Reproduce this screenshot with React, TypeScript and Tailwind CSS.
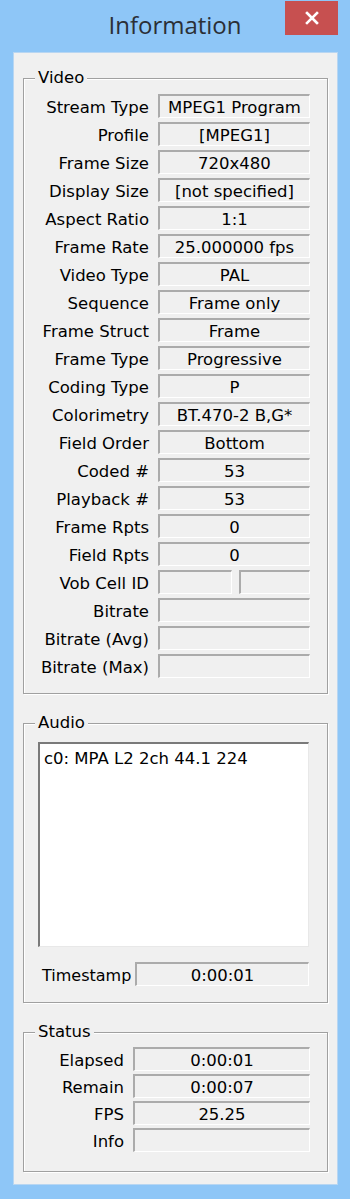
import React from "react";

const F = { fontFamily: '"DejaVu Sans", "Liberation Sans", sans-serif' };

function Field({ value, className = "" }: { value?: string; className?: string }) {
  return (
    <div
      className={
        "h-[24px] pt-[3px] flex items-center justify-center border-t-2 border-l-2 border-[#ababab] border-b border-r border-b-white border-r-white bg-[#f0f0f0] text-[16.5px] text-black leading-none whitespace-nowrap overflow-hidden " +
        className
      }
    >
      {value}
    </div>
  );
}

function Group({ title, className = "", children }: { title: string; className?: string; children: React.ReactNode }) {
  return (
    <div
      className={
        "relative border border-[#a0a0a0] shadow-[inset_1px_1px_0_#ffffff,1px_1px_0_#ffffff] " + className
      }
    >
      <span className="absolute -top-[11px] left-[11px] px-[3px] bg-[#f0f0f0] text-[16.5px] leading-[20px] text-black">
        {title}
      </span>
      {children}
    </div>
  );
}

const videoRows: [string, string | null][] = [
  ["Stream Type", "MPEG1 Program"],
  ["Profile", "[MPEG1]"],
  ["Frame Size", "720x480"],
  ["Display Size", "[not specified]"],
  ["Aspect Ratio", "1:1"],
  ["Frame Rate", "25.000000 fps"],
  ["Video Type", "PAL"],
  ["Sequence", "Frame only"],
  ["Frame Struct", "Frame"],
  ["Frame Type", "Progressive"],
  ["Coding Type", "P"],
  ["Colorimetry", "BT.470-2 B,G*"],
  ["Field Order", "Bottom"],
  ["Coded #", "53"],
  ["Playback #", "53"],
  ["Frame Rpts", "0"],
  ["Field Rpts", "0"],
  ["Vob Cell ID", null],
  ["Bitrate", ""],
  ["Bitrate (Avg)", ""],
  ["Bitrate (Max)", ""],
];

const statusRows: [string, string][] = [
  ["Elapsed", "0:00:01"],
  ["Remain", "0:00:07"],
  ["FPS", "25.25"],
  ["Info", ""],
];

export default function App() {
  return (
    <div className="w-[350px] h-[1199px] bg-[#8ec6f7] flex flex-col overflow-hidden" style={F}>
      {/* Title bar */}
      <div className="relative h-[52px] flex items-start justify-center">
        <span
          className="mt-[9px] text-[24px] leading-[32px] text-[#2b2f36]"
          style={{ fontFamily: '"Open Sans", "Noto Sans", sans-serif' }}
        >
          Information
        </span>
        <div className="absolute left-[285px] top-[1px] w-[53px] h-[34px] bg-[#c75050] flex items-center justify-center">
          <svg width="14" height="14" viewBox="0 0 14 14">
            <path d="M2 2 L12 12 M12 2 L2 12" stroke="#ffffff" strokeWidth="2.6" strokeLinecap="square" />
          </svg>
        </div>
      </div>

      {/* Client area */}
      <div className="ml-[13px] w-[325px] h-[1133px] bg-[#f0f0f0] border border-[#b8d6f2] px-[9px] pt-[25px] flex flex-col">
        {/* Video */}
        <Group title="Video">
          <div className="pt-[15px] pb-[15px] grid grid-cols-[125px_152px] gap-x-[9px] gap-y-[4px]">
            {videoRows.map(([label, value]) => (
              <React.Fragment key={label}>
                <div className="h-[24px] pt-[4px] flex items-center justify-end text-[16.5px] text-black whitespace-nowrap">
                  {label}
                </div>
                {value === null ? (
                  <div className="flex gap-[7px]">
                    <Field className="w-[74px]" />
                    <Field className="flex-1" />
                  </div>
                ) : (
                  <Field value={value} />
                )}
              </React.Fragment>
            ))}
          </div>
        </Group>

        {/* Audio */}
        <Group title="Audio" className="mt-[29px]">
          <div className="pt-[18px] pb-[16px] pl-[14px] pr-[18px]">
            <div className="h-[205px] bg-white border-t-2 border-l-2 border-[#7a7a7a] border-b border-r border-b-[#e8e8e8] border-r-[#e8e8e8] px-[4px] pt-[5px] text-[16.5px] leading-[20px] text-black">
              c0: MPA L2 2ch 44.1 224
            </div>
            <div className="mt-[15px] h-[24px] flex items-center">
              <span className="ml-[4px] h-[24px] pt-[4px] flex items-center text-[16px] text-black">Timestamp</span>
              <Field value="0:00:01" className="ml-auto w-[174px]" />
            </div>
          </div>
        </Group>

        {/* Status */}
        <Group title="Status" className="mt-[29px]">
          <div className="pt-[14px] pb-[19px] grid grid-cols-[100px_177px] gap-x-[9px] gap-y-[3px]">
            {statusRows.map(([label, value]) => (
              <React.Fragment key={label}>
                <div className="h-[24px] pt-[4px] flex items-center justify-end text-[16.5px] text-black whitespace-nowrap">
                  {label}
                </div>
                <Field value={value} />
              </React.Fragment>
            ))}
          </div>
        </Group>
      </div>
    </div>
  );
}
